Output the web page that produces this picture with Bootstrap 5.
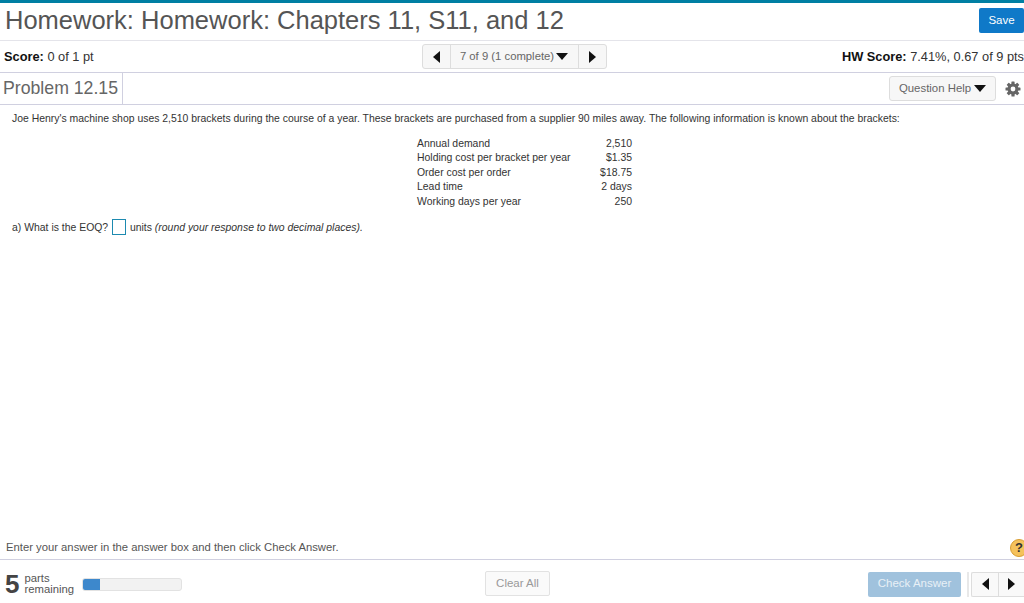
<!DOCTYPE html>
<html lang="en"><head><meta charset="utf-8"><title>Homework</title>
<link href="https://cdn.jsdelivr.net/npm/bootstrap@5.3.0/dist/css/bootstrap.min.css" rel="stylesheet">
<style>
html,body{height:603px;overflow:hidden}
body{font-family:"Liberation Sans",Arial,sans-serif;color:#222;font-size:11px;background:#fff}
.shell{height:603px;border-top:3px solid #007fa3}
.titlebar{height:38px;border-bottom:1px solid #e4e4ea;padding:0 0 2px 5px}
.hw-title{font-size:25.5px;font-weight:400;color:#555;margin:0;line-height:1}
.save-btn{background:#0f79c8;color:#fff;font-size:11.5px;height:25px;width:45px;border-radius:2px;border:0;padding:0}
.scorebar{height:32px;border-bottom:1px solid #d0d0e0;padding:0 0 0 4px;font-size:12.8px;color:#333}
.scorebar b{color:#111}
.score-side{flex:1 1 0}
.pager{height:25px;border:1px solid #ddd;border-radius:3px;background:#f7f7f7;font-size:11.3px;color:#666}
.pg-cell{height:100%;padding:0 10px;border-right:1px solid #ddd}
.pg-cell:last-child{border-right:0}
.pg-mid{width:128px;justify-content:center;padding:0;gap:2px}
.tri-l,.tri-r,.tri-d{display:inline-block;width:0;height:0;border-style:solid;border-color:transparent}
.tri-l{border-width:6px 7px 6px 0;border-right-color:#111}
.tri-r{border-width:6px 0 6px 7px;border-left-color:#111}
.tri-d{border-width:7px 6px 0 6px;border-top-color:#111}
.probbar{height:32px;border-bottom:1px solid #d0d0e0;padding-right:3px}
.prob-title{font-size:17.7px;color:#666;padding:0 4px 0 3px;height:100%;border-right:1px solid #d0d0e0;line-height:30px}
.qh-btn{width:107px;height:25px;border:1px solid #ddd;border-radius:3px;background:#f7f7f7;color:#666;font-size:11.4px;gap:3px;margin-right:1px}
.stage{padding:7px 12px 0;color:#333;font-size:10.43px;line-height:14.5px}
.prompt{margin:0 0 10px}
.givens{width:215px;margin-left:405px;margin-bottom:11px}
.answer-line{line-height:15px}
.ans-box{display:inline-block;width:14px;height:16px;border:1.5px solid #1d8ab0;vertical-align:top;margin:-1px 1px 0}
.footnote{height:24px;border-bottom:1px solid #d0d0e0;padding:0 0 0 6px;font-size:11.27px;color:#555}
.help-dot{width:18px;height:18px;border-radius:50%;background:#f5c25c;border:1px solid #d89d32;color:#333;font-weight:700;font-size:13px;margin-right:-4px;flex:none}
.actionbar{height:43px;padding:5px 0 0 5px}
.big-five{font-size:26px;font-weight:700;color:#444;line-height:1;margin-right:5px}
.parts{font-size:11.3px;line-height:11.5px;color:#555}
.meter{width:100px;height:13px;background:#f2f2f2;border:1px solid #e2e2e2;border-radius:3px;margin-left:8px;overflow:hidden}
.meter-fill{height:100%;background:#3d88cc}
.clear-btn{width:65px;height:25px;border:1px solid #e2e2e2;border-radius:2px;background:#fafafa;color:#999;font-size:11.5px;left:485px;top:11px}
.check-btn{width:93px;height:25px;border-radius:2px;background:#a0c2dd;color:#e8f0f6;font-size:11.5px}
.vsep{width:2px;height:25px;background:#e8e8e8;margin:0 2px 0 6px}
.mini-pager{width:53px;height:25px;border:1px solid #ddd;border-radius:2px 0 0 2px;border-right:0;background:#f9f9f9}
.mini-pager>span{height:100%;display:flex;align-items:center;justify-content:center}
.mini-pager>span:first-child{width:27px;border-right:1px solid #ddd}
.mini-pager>span:last-child{flex:1}
</style></head>
<body>
<div class="shell d-flex flex-column">
  <header class="titlebar d-flex align-items-center justify-content-between">
    <h1 class="hw-title">Homework: Homework: Chapters 11, S11, and 12</h1>
    <button class="save-btn" type="button">Save</button>
  </header>
  <div class="scorebar d-flex align-items-center justify-content-between">
    <div class="score-side"><b>Score:</b> 0 of 1 pt</div>
    <div class="pager d-flex align-items-center">
      <span class="pg-cell d-flex align-items-center"><i class="tri-l"></i></span>
      <span class="pg-cell pg-mid d-flex align-items-center">7 of 9 (1 complete) <i class="tri-d"></i></span>
      <span class="pg-cell d-flex align-items-center"><i class="tri-r"></i></span>
    </div>
    <div class="text-end score-side"><b>HW Score:</b> 7.41%, 0.67 of 9 pts</div>
  </div>
  <div class="probbar d-flex align-items-center justify-content-between">
    <div class="prob-title">Problem 12.15</div>
    <div class="d-flex align-items-center gap-2">
      <div class="qh-btn d-flex align-items-center justify-content-center">Question Help <i class="tri-d"></i></div>
      <svg width="16" height="16" viewBox="0 0 16 16" aria-hidden="true"><g fill="#666"><circle cx="8" cy="8" r="5.5"/><rect x="6.4" y="0.5" width="3.2" height="15" rx=".6"/><rect x="6.4" y="0.5" width="3.2" height="15" rx=".6" transform="rotate(45 8 8)"/><rect x="6.4" y="0.5" width="3.2" height="15" rx=".6" transform="rotate(90 8 8)"/><rect x="6.4" y="0.5" width="3.2" height="15" rx=".6" transform="rotate(135 8 8)"/></g><circle cx="8" cy="8" r="2.4" fill="#fff"/></svg>
    </div>
  </div>
  <main class="stage flex-grow-1">
    <p class="prompt">Joe Henry's machine shop uses 2,510 brackets during the course of a year. These brackets are purchased from a supplier 90 miles away. The following information is known about the brackets:</p>
    <div class="givens">
      <div class="d-flex justify-content-between"><span>Annual demand</span><span>2,510</span></div>
      <div class="d-flex justify-content-between"><span>Holding cost per bracket per year</span><span>$1.35</span></div>
      <div class="d-flex justify-content-between"><span>Order cost per order</span><span>$18.75</span></div>
      <div class="d-flex justify-content-between"><span>Lead time</span><span>2 days</span></div>
      <div class="d-flex justify-content-between"><span>Working days per year</span><span>250</span></div>
    </div>
    <div class="answer-line">a) What is the EOQ? <span class="ans-box"></span> units <em>(round your response to two decimal places).</em></div>
  </main>
  <div class="footnote d-flex align-items-center justify-content-between">
    <span>Enter your answer in the answer box and then click Check Answer.</span>
    <span class="help-dot d-flex align-items-center justify-content-center">?</span>
  </div>
  <footer class="actionbar d-flex align-items-center position-relative">
    <div class="big-five">5</div>
    <div class="parts">parts<br>remaining</div>
    <div class="meter"><div class="meter-fill" style="width:17%"></div></div>
    <div class="clear-btn d-flex align-items-center justify-content-center position-absolute">Clear All</div>
    <div class="ms-auto d-flex align-items-center">
      <div class="check-btn d-flex align-items-center justify-content-center">Check Answer</div>
      <div class="vsep"></div>
      <div class="mini-pager d-flex"><span><i class="tri-l"></i></span><span><i class="tri-r"></i></span></div>
    </div>
  </footer>
</div>
<script src="https://cdn.jsdelivr.net/npm/bootstrap@5.3.0/dist/js/bootstrap.bundle.min.js"></script>
</body></html>
